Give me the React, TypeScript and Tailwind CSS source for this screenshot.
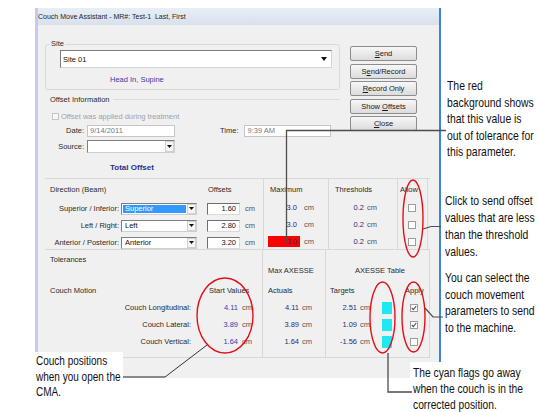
import React from 'react';

const ui = "font-['Liberation_Sans',Arial,sans-serif]";

function Arrow() {
  return (
    <svg width="5" height="3" viewBox="0 0 5 3">
      <path d="M0 0h5L2.5 3z" fill="#111" />
    </svg>
  );
}

function Combo({ className, value, selected }: { className: string; value: string; selected?: boolean }) {
  return (
    <div className={`${className} flex border border-[#7f7f7f] border-r-[#cfcfcf] border-b-[#cfcfcf] bg-white`}>
      <div className="flex-1 p-[1px]">
        <div className={`flex h-full items-center pl-[2px] ${selected ? 'bg-[#3399ff] text-white' : 'text-[#111]'}`}>{value}</div>
      </div>
      <div className="flex w-[9px] items-center justify-center border border-[#d0d0d0] bg-[#f6f6f6]">
        <Arrow />
      </div>
    </div>
  );
}

function Field({ className, value, right, muted }: { className: string; value: string; right?: boolean; muted?: boolean }) {
  return (
    <div
      className={`${className} flex h-[12px] items-center bg-white ${
        muted ? 'border border-[#c3c5c9] text-[#7a7a7a]' : 'border border-[#6f6f6f] border-r-[#dadada] border-b-[#dadada] text-[#111]'
      } ${right ? 'justify-end pr-[3px]' : 'pl-[2px]'}`}
    >
      {value}
    </div>
  );
}

function Check({ checked, className = '' }: { checked?: boolean; className?: string }) {
  return (
    <div className={`${className} flex h-[8px] w-[8px] items-center justify-center border border-[#9c9c9c] bg-white`}>
      {checked && (
        <svg width="6" height="6" viewBox="0 0 6 6">
          <path d="M0.8 3l1.5 1.6L5.2 1.2" fill="none" stroke="#555" strokeWidth="1.1" />
        </svg>
      )}
    </div>
  );
}

function Btn({ children }: { children: React.ReactNode }) {
  return (
    <div className="flex h-[15px] w-[67px] items-center justify-center rounded-[2px] border border-[#8c8d8e] bg-gradient-to-b from-[#f7f7f7] to-[#dcdcdc] text-[#1a1a1a]">
      <span className="whitespace-pre">{children}</span>
    </div>
  );
}

// callout text: Arial Narrow look, done by squeezing Liberation Sans
function Note({ className, children }: { className: string; children: React.ReactNode }) {
  return (
    <div className={`${className} origin-top-left whitespace-nowrap font-['Liberation_Sans',Arial,sans-serif] text-[#111]`}>
      {children}
    </div>
  );
}

const directions = [
  { label: 'Superior / Inferior:', combo: 'Superior', offset: '1.60', red: false, selected: true },
  { label: 'Left / Right:', combo: 'Left', offset: '2.80', red: false, selected: false },
  { label: 'Anterior / Posterior:', combo: 'Anterior', offset: '3.20', red: true, selected: false },
];

const couch = [
  { label: 'Couch Longitudinal:', start: '4.11', actual: '4.11', target: '2.51', apply: true },
  { label: 'Couch Lateral:', start: '3.89', actual: '3.89', target: '1.09', apply: true },
  { label: 'Couch Vertical:', start: '1.64', actual: '1.64', target: '-1.56', apply: false },
];

function Window() {
  return (
    <div className="flex h-[370px] w-[406px] flex-col border-l-[3px] border-r-2 border-l-[#c6caf1] border-r-[#3d84d2] bg-[#f0f0f0] text-[7.5px] leading-[9px] text-[#2b2b2b]">
      <div className="flex h-[17px] items-center bg-gradient-to-b from-[#e7eef6] to-[#d8e1ec] text-[7px] text-[#1e1e1e]">
        Couch Move Assistant - MR#: Test-1&nbsp;&nbsp;Last, First
      </div>
      <div className="flex-1 pl-[7px] pt-[19px]">
        <div className="flex">
          <div className="w-[295px]">
            <div className="h-[46px] rounded-[3px] border border-[#d9d9d9]">
              <div className="-mt-[6px] ml-[4px] w-fit bg-[#f0f0f0] px-[1px]">Site</div>
              <div className="ml-[14px] mt-[2px] flex h-[18px] w-[272px] border border-[#7a7a7a] border-r-[#d4d4d4] border-b-[#d4d4d4] bg-white">
                <div className="flex flex-1 items-center pl-[2px] text-[#111]">Site 01</div>
                <div className="flex w-[15px] items-center justify-center">
                  <svg width="6" height="4" viewBox="0 0 6 4">
                    <path d="M0 0h6L3 4z" fill="#111" />
                  </svg>
                </div>
              </div>
              <div className="ml-[64px] mt-[7px] text-[#3a3aa8]">Head In, Supine</div>
            </div>

            <div className="mt-[5px] flex items-center pl-[5px]">
              <span>Offset Information</span>
              <div className="ml-[4px] flex-1 border-t border-[#dcdcdc]" />
            </div>
            <div className="mt-[8px] flex items-center pl-[7px] text-[#a2a2a2]">
              <div className="h-[7px] w-[7px] border border-[#c4c4c4] bg-[#f7f7f7]" />
              <span className="ml-[2px]">Offset was applied during treatment</span>
            </div>
            <div className="mt-[3.5px] flex items-center">
              <div className="w-[39px] text-right">Date:</div>
              <Field className="ml-[3px] w-[88px]" value="9/14/2011" muted />
              <div className="ml-[45px]">Time:</div>
              <Field className="ml-[6px] w-[87px]" value="9:39 AM" muted />
            </div>
            <div className="mt-[3px] flex items-center">
              <div className="w-[39px] text-right">Source:</div>
              <Combo className="ml-[3px] h-[13px] w-[88px]" value="" />
            </div>
            <div className="ml-[65px] mt-[10px] text-[8px] font-bold leading-[10px] text-[#26318f]">Total Offset</div>
          </div>

          <div className="ml-[10px] mt-[2px] flex flex-col gap-[2.5px]">
            <Btn><span className="underline">S</span>end</Btn>
            <Btn>S<span className="underline">e</span>nd/Record</Btn>
            <Btn><span className="underline">R</span>ecord Only</Btn>
            <Btn>{'Show '}<span className="underline">O</span>ffsets</Btn>
            <Btn><span className="underline">C</span>lose</Btn>
          </div>
        </div>

        <div className="mt-[5.5px] flex h-[72px] w-[385px] border-y border-[#d8d8d8]">
          <div className="w-[218px]">
            <div className="flex h-[21px] items-center">
              <div className="w-[162px] pl-[5px]">Direction (Beam)</div>
              <div className="pl-[1px]">Offsets</div>
            </div>
            {directions.map((d) => (
              <div key={d.label} className="flex h-[17px] items-center">
                <div className="w-[74px] text-right">{d.label}</div>
                <Combo className="ml-[2px] h-[12px] w-[76px]" value={d.combo} selected={d.selected} />
                <Field className="ml-[10px] w-[33px]" value={d.offset} right />
                <span className="ml-[5px] text-[#555]">cm</span>
              </div>
            ))}
          </div>
          <div className="w-[65px] border-l border-[#d8d8d8]">
            <div className="flex h-[20px] items-center pl-[6px]">Maximum</div>
            {directions.map((d) => (
              <div key={d.label} className="flex h-[17px] items-center">
                <div className={`ml-[4px] h-[11px] w-[32px] pr-[3px] text-right leading-[11px] text-[#2e2e7a] ${d.red ? 'bg-[#ff0000]' : ''}`}>3.0</div>
                <span className="ml-[4px] text-[#555]">cm</span>
              </div>
            ))}
          </div>
          <div className="w-[69px] border-l border-[#d8d8d8]">
            <div className="flex h-[20px] items-center pl-[6px]">Thresholds</div>
            {directions.map((d) => (
              <div key={d.label} className="flex h-[17px] items-center">
                <div className="w-[35px] text-right text-[#2e2e7a]">0.2</div>
                <span className="ml-[3px] text-[#555]">cm</span>
              </div>
            ))}
          </div>
          <div className="w-[31px] border-x border-[#d8d8d8]">
            <div className="flex h-[20px] items-center pl-[2px]">Allow</div>
            {directions.map((d) => (
              <div key={d.label} className="flex h-[17px] items-center">
                <Check className="ml-[10px]" />
              </div>
            ))}
          </div>
        </div>

        <div className="flex h-[108px] w-[385px] border-b border-[#d8d8d8]">
          <div className="w-[217px]">
            <div className="flex h-[18px] items-center pl-[5px]">Tolerances</div>
            <div className="h-[14px]" />
            <div className="flex h-[17px] items-center">
              <div className="w-[164px] pl-[5px]">Couch Motion</div>
              <div>Start Values</div>
            </div>
            {couch.map((c) => (
              <div key={c.label} className="flex h-[17px] items-center">
                <div className="w-[146px] text-right">{c.label}</div>
                <div className="w-[47px] text-right text-[#3b3bb5]">{c.start}</div>
                <span className="ml-[4px] text-[#555]">cm</span>
              </div>
            ))}
          </div>
          <div className="w-[63px] border-l border-[#d8d8d8]">
            <div className="h-[32px] pl-[5px] pt-[16px]">Max AXESSE</div>
            <div className="flex h-[17px] items-center pl-[5px]">Actuals</div>
            {couch.map((c) => (
              <div key={c.label} className="flex h-[17px] items-center">
                <div className="w-[36px] text-right text-[#2e2e7a]">{c.actual}</div>
                <span className="ml-[3px] text-[#555]">cm</span>
              </div>
            ))}
          </div>
          <div className="w-[105px] border-x border-[#d8d8d8]">
            <div className="h-[32px] pl-[29px] pt-[16px]">AXESSE Table</div>
            <div className="flex h-[17px] items-center">
              <div className="w-[79px] pl-[4px]">Targets</div>
              <div>Apply</div>
            </div>
            {couch.map((c) => (
              <div key={c.label} className="flex h-[17px] items-center">
                <div className="w-[31px] text-right text-[#2e2e7a]">{c.target}</div>
                <span className="ml-[3px] text-[#555]">cm</span>
                <div className="ml-[12px] h-[12px] w-[10px] bg-[#1ee8f0]" />
                <Check className="ml-[18px]" checked={c.apply} />
              </div>
            ))}
          </div>
        </div>
      </div>
    </div>
  );
}

export default function App() {
  return (
    <div className={`relative h-[412px] w-[538px] overflow-hidden bg-white ${ui}`}>
      <div className="pl-[35px] pt-[8px]">
        <Window />
      </div>

      {/* heading of the next section, only the tops of its tall letters show */}
      <div className="absolute left-[14px] top-[410px] whitespace-nowrap text-[20px] font-bold leading-[20px] text-black">
        Using the Couch Move Assistant
      </div>

      {/* callout texts */}
      <Note className="absolute left-[447px] top-[78px] scale-x-[0.8] text-[13px] leading-[16.6px]">
        The red<br />background shows<br />that this value is<br />out of tolerance for<br />this parameter.
      </Note>
      <Note className="absolute left-[445px] top-[192px] scale-x-[0.8] text-[13px] leading-[17px]">
        Click to send offset<br />values that are less<br />than the threshold<br />values.
      </Note>
      <Note className="absolute left-[445px] top-[270px] scale-x-[0.8] text-[13px] leading-[16.5px]">
        You can select the<br />couch movement<br />parameters to send<br />to the machine.
      </Note>
      <div className="absolute left-[410px] top-[362px] h-[50px] w-[128px] bg-white pl-[3px] pt-[3px]">
        <Note className="scale-x-[0.82] text-[12.5px] leading-[16px]">
          The cyan flags go away<br />when the couch is in the<br />corrected position.
        </Note>
      </div>
      <div className="absolute left-[35px] top-[352px] h-[60px] w-[88px] bg-white pl-[1px] pt-[2px]">
        <Note className="scale-x-[0.8] text-[12.5px] leading-[15.5px]">
          Couch positions<br />when you open the<br />CMA.
        </Note>
      </div>

      {/* callout lines and rings */}
      <svg className="pointer-events-none absolute left-0 top-0" width="538" height="412" viewBox="0 0 538 412">
        <polyline points="446,130.5 286.5,130.5 286.5,242" fill="none" stroke="#4d4d4d" strokeWidth="1.3" />
        <ellipse cx="413" cy="218.5" rx="10" ry="38.5" fill="none" stroke="#e3101a" strokeWidth="1.4" />
        <polyline points="423,229 431,226.5 441,226.5" fill="none" stroke="#4d4d4d" strokeWidth="1.2" />
        <ellipse cx="225" cy="315.5" rx="28" ry="37.5" fill="none" stroke="#e3101a" strokeWidth="1.4" />
        <ellipse cx="382.5" cy="317.5" rx="12.5" ry="35.5" fill="none" stroke="#e3101a" strokeWidth="1.4" />
        <ellipse cx="413.5" cy="317" rx="11.5" ry="35" fill="none" stroke="#e3101a" strokeWidth="1.4" />
        <polyline points="425,308 433,317 443,317" fill="none" stroke="#4d4d4d" strokeWidth="1.2" />
        <polyline points="388,353 388,392 412,392" fill="none" stroke="#4d4d4d" strokeWidth="1.3" />
        <line x1="123" y1="377" x2="165" y2="377" stroke="#8a8a8a" strokeWidth="2" />
        <line x1="165" y1="377" x2="207" y2="345" stroke="#333" strokeWidth="1" />
      </svg>
    </div>
  );
}
